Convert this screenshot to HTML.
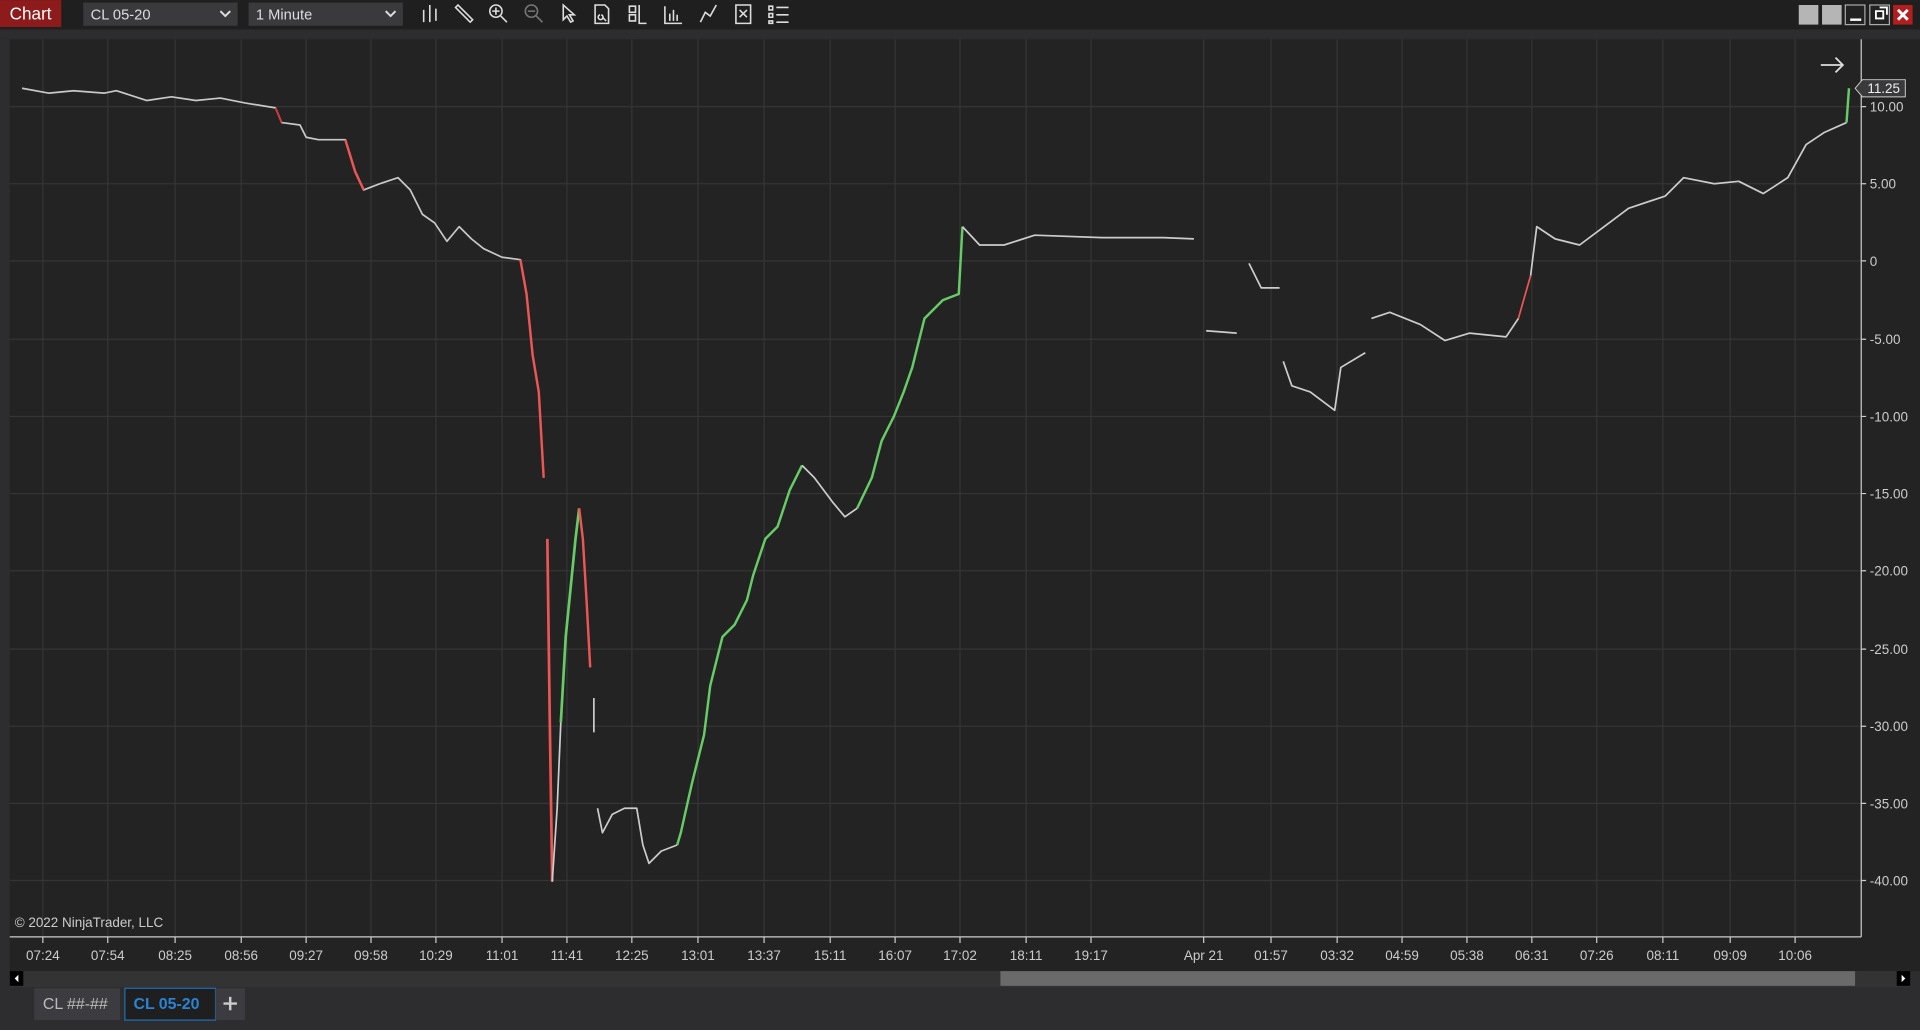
<!DOCTYPE html>
<html><head><meta charset="utf-8"><style>
html,body{margin:0;padding:0;background:#2d2d30;overflow:hidden}
svg{display:block}
text{font-family:"Liberation Sans",sans-serif}
</style></head><body>
<svg width="1920" height="1030" viewBox="0 0 1568 841" xmlns="http://www.w3.org/2000/svg">
<rect width="1568" height="841" fill="#2d2d30"/>
<!-- toolbar -->
<rect x="0" y="0" width="1568" height="24" fill="#1f1f1f"/>
<rect x="0" y="24" width="1568" height="8" fill="#2d2d30"/>
<rect x="0" y="0" width="50" height="22" fill="#8e1b1b"/>
<text x="25" y="16" fill="#fff" font-size="14" text-anchor="middle">Chart</text>
<rect x="68" y="2" width="126" height="19" fill="#3a3a3d"/>
<text x="74" y="16" fill="#ddd" font-size="12">CL 05-20</text>
<path d="M180 9 l4 4 l4 -4" stroke="#ddd" stroke-width="1.6" fill="none"/>
<rect x="203" y="2" width="126" height="19" fill="#3a3a3d"/>
<text x="209" y="16" fill="#ddd" font-size="12">1 Minute</text>
<path d="M315 9 l4 4 l4 -4" stroke="#ddd" stroke-width="1.6" fill="none"/>
<g stroke="#ddd" stroke-width="1.3" fill="none">
<path d="M346 8v10 M351 4v14 M356 7v10"/>
<path d="M372 6 l12 12 l2 -2 l-12 -12z"/>
<circle cx="405" cy="9" r="5"/><path d="M409 13l5 5 M402 9h6 M405 6v6"/>
<circle cx="434" cy="9" r="5" stroke="#777"/><path d="M438 13l5 5 M431 9h6" stroke="#777"/>
<path d="M460 4 l0 12 l3 -3 l3 5 l2 -1 l-3 -5 l4 0z"/>
<path d="M486 4h8l3 3v12h-11z M490 12 a2 2 0 1 0 1 0 M492 14l3 3"/>
<path d="M514 5h5v5h-5z M514 12h5v5h-5z M522 4v15h6"/>
<path d="M543 5v14h14 M547 17v-6 M550 17v-9 M553 17v-5"/>
<path d="M572 18 l4 -8 l4 3 l5 -9"/>
<path d="M601 4h12v15h-12z M604 8l6 6 M610 8l-6 6"/>
<path d="M628 5h3v3h-3z M628 11h3v3h-3z M628 17h3v2h-3z M634 6h10 M634 12h10 M634 18h10"/>
</g>
<rect x="1469" y="4" width="16" height="16" fill="#b5b5b5"/>
<rect x="1488" y="4" width="16" height="16" fill="#b5b5b5"/>
<rect x="1507" y="4" width="16" height="16" fill="#222" stroke="#aaa"/>
<path d="M1511 16h9" stroke="#fff" stroke-width="2"/>
<rect x="1527" y="4" width="16" height="16" fill="#222" stroke="#aaa"/>
<path d="M1532 9h6v6h-6z M1535 6h6v6" stroke="#fff" stroke-width="1.5" fill="none"/>
<rect x="1546" y="4" width="16" height="16" fill="#b21d1d"/>
<path d="M1550 8l8 8 M1558 8l-8 8" stroke="#fff" stroke-width="2.4"/>
<!-- chart area -->
<rect x="8" y="32" width="1512" height="733" fill="#232323"/>
<rect x="1520" y="32" width="48" height="761" fill="#232323"/>
<rect x="8" y="765" width="1512" height="28" fill="#232323"/>
<g stroke="#353535" stroke-width="1">
<path d="M35 32v733 M88 32v733 M143 32v733 M197 32v733 M250 32v733 M303 32v733 M356 32v733 M410 32v733 M463 32v733 M516 32v733 M570 32v733 M624 32v733 M678 32v733 M731 32v733 M784 32v733 M838 32v733 M891 32v733 M983 32v733 M1038 32v733 M1092 32v733 M1145 32v733 M1198 32v733 M1251 32v733 M1304 32v733 M1358 32v733 M1413 32v733 M1466 32v733"/>
<path d="M8 87h1512 M8 150h1512 M8 213h1512 M8 277h1512 M8 340h1512 M8 403h1512 M8 466h1512 M8 530h1512 M8 593h1512 M8 656h1512 M8 719h1512"/>
</g>
<path d="M1520 32v733 M8 765h1512" stroke="#ccc" stroke-width="1"/>
<g stroke="#ccc"><path d="M35 765v5 M88 765v5 M143 765v5 M197 765v5 M250 765v5 M303 765v5 M356 765v5 M410 765v5 M463 765v5 M516 765v5 M570 765v5 M624 765v5 M678 765v5 M731 765v5 M784 765v5 M838 765v5 M891 765v5 M983 765v5 M1038 765v5 M1092 765v5 M1145 765v5 M1198 765v5 M1251 765v5 M1304 765v5 M1358 765v5 M1413 765v5 M1466 765v5"/>
<path d="M1520 87h4 M1520 150h4 M1520 213h4 M1520 277h4 M1520 340h4 M1520 403h4 M1520 466h4 M1520 530h4 M1520 593h4 M1520 656h4 M1520 719h4"/></g>
<g fill="#ccc" font-size="11" text-anchor="middle">
<text x="35" y="784">07:24</text><text x="88" y="784">07:54</text><text x="143" y="784">08:25</text><text x="197" y="784">08:56</text><text x="250" y="784">09:27</text><text x="303" y="784">09:58</text><text x="356" y="784">10:29</text><text x="410" y="784">11:01</text><text x="463" y="784">11:41</text><text x="516" y="784">12:25</text><text x="570" y="784">13:01</text><text x="624" y="784">13:37</text><text x="678" y="784">15:11</text><text x="731" y="784">16:07</text><text x="784" y="784">17:02</text><text x="838" y="784">18:11</text><text x="891" y="784">19:17</text><text x="983" y="784">Apr 21</text><text x="1038" y="784">01:57</text><text x="1092" y="784">03:32</text><text x="1145" y="784">04:59</text><text x="1198" y="784">05:38</text><text x="1251" y="784">06:31</text><text x="1304" y="784">07:26</text><text x="1358" y="784">08:11</text><text x="1413" y="784">09:09</text><text x="1466" y="784">10:06</text>
</g>
<g fill="#ccc" font-size="11">
<text x="1527" y="91">10.00</text><text x="1527" y="154">5.00</text><text x="1527" y="217">0</text><text x="1527" y="281">-5.00</text><text x="1527" y="344">-10.00</text><text x="1527" y="407">-15.00</text><text x="1527" y="470">-20.00</text><text x="1527" y="534">-25.00</text><text x="1527" y="597">-30.00</text><text x="1527" y="660">-35.00</text><text x="1527" y="723">-40.00</text>
</g>
<path d="M1515 72 l6 -7 h35 v14 h-35z" fill="#3a3a3d" stroke="#ccc" stroke-width="0.8"/>
<text x="1525" y="76" fill="#eee" font-size="11">11.25</text>
<path d="M1487 53h18 M1499 47l6 6l-6 6" stroke="#ddd" stroke-width="1.5" fill="none"/>
<text x="12" y="757" fill="#ccc" font-size="11">© 2022 NinjaTrader, LLC</text>
<!-- price data -->
<g fill="none" stroke-width="1.4" stroke-linejoin="round">
<polyline stroke="#c8c8c8" points="18,72 40,76 60,74 85,76 95,74 120,82 140,79 160,82 180,80 200,84 225,88 230,100 245,102 250,112 260,114 282,114 290,140 297,155 310,150 325,145 335,155 345,175 355,182 365,197 375,185 385,195 395,203 410,210 425,212 430,240 435,290 440,320 444,390"/>
<polyline stroke="#d33" points="225,88 230,100 M282,114" />
<polyline stroke="#e55" stroke-width="2" points="282,114 290,140 297,155"/>
<polyline stroke="#e55" stroke-width="2" points="425,212 430,240 435,290 440,320 444,390"/>
<polyline stroke="#e55" stroke-width="2.2" points="447,440 449,590 451,720"/>
<polyline stroke="#ccc" points="451,720 455,660 458,590"/>
<polyline stroke="#6c6" stroke-width="2.2" points="458,590 462,520 466,480 470,440 473,415"/>
<polyline stroke="#e55" stroke-width="2" points="473,415 476,440 479,490 482,545"/>
<polyline stroke="#ccc" points="485,570 485,598"/>
<polyline stroke="#ccc" points="488,660 492,680 500,665 510,660 520,660 525,690 530,705 540,695 553,690"/>
<polyline stroke="#6c6" stroke-width="2" points="553,690 556,680 565,640 575,600 580,560 590,520 600,510 610,490 615,470 625,440 635,430 645,400 655,380"/>
<polyline stroke="#ccc" points="655,380 665,390 680,410 690,422 700,415"/>
<polyline stroke="#6c6" stroke-width="2" points="700,415 712,390 720,360 730,340 738,320 745,300 755,260 770,245 783,240 786,185"/>
<polyline stroke="#ccc" points="786,185 800,200 820,200 845,192 900,194 950,194 975,195"/>
<polyline stroke="#ccc" points="985,270 1010,272"/>
<polyline stroke="#ccc" points="1020,215 1030,235 1045,235"/>
<polyline stroke="#ccc" points="1048,295 1055,315 1070,320 1090,335 1095,300 1115,288"/>
<polyline stroke="#ccc" points="1120,260 1135,255 1160,265 1180,278 1200,272 1230,275 1240,260"/>
<polyline stroke="#e55" points="1240,260 1250,225"/>
<polyline stroke="#ccc" points="1250,225 1255,185 1270,195 1290,200 1310,185 1330,170 1360,160 1375,145 1400,150 1420,148 1440,158 1460,145 1475,118 1490,108 1508,100"/>
<polyline stroke="#6c6" stroke-width="2" points="1508,100 1510,72"/>
</g>
<!-- scrollbar -->
<rect x="8" y="793" width="1552" height="13" fill="#333"/>
<rect x="817" y="793" width="698" height="12" fill="#6a6a6a"/>
<rect x="8" y="793" width="11" height="12" fill="#000"/>
<path d="M15 796l-3 3l3 3z" fill="#fff"/>
<rect x="1549" y="793" width="11" height="12" fill="#000"/>
<path d="M1553 796l3 3l-3 3z" fill="#fff"/>
<!-- tabs -->
<rect x="28" y="807" width="70" height="26" fill="#3c3c40"/>
<text x="35" y="824" fill="#bbb" font-size="13">CL ##-##</text>
<rect x="102" y="807" width="74" height="26" fill="#1f1f1f" stroke="#1e6fb8"/>
<text x="109" y="824" fill="#2a84d6" font-size="13" font-weight="bold">CL 05-20</text>
<rect x="176" y="807" width="24" height="26" fill="#3c3c40"/>
<path d="M188 814v11 M182.5 819.5h11" stroke="#ccc" stroke-width="2"/>
</svg>
</body></html>
